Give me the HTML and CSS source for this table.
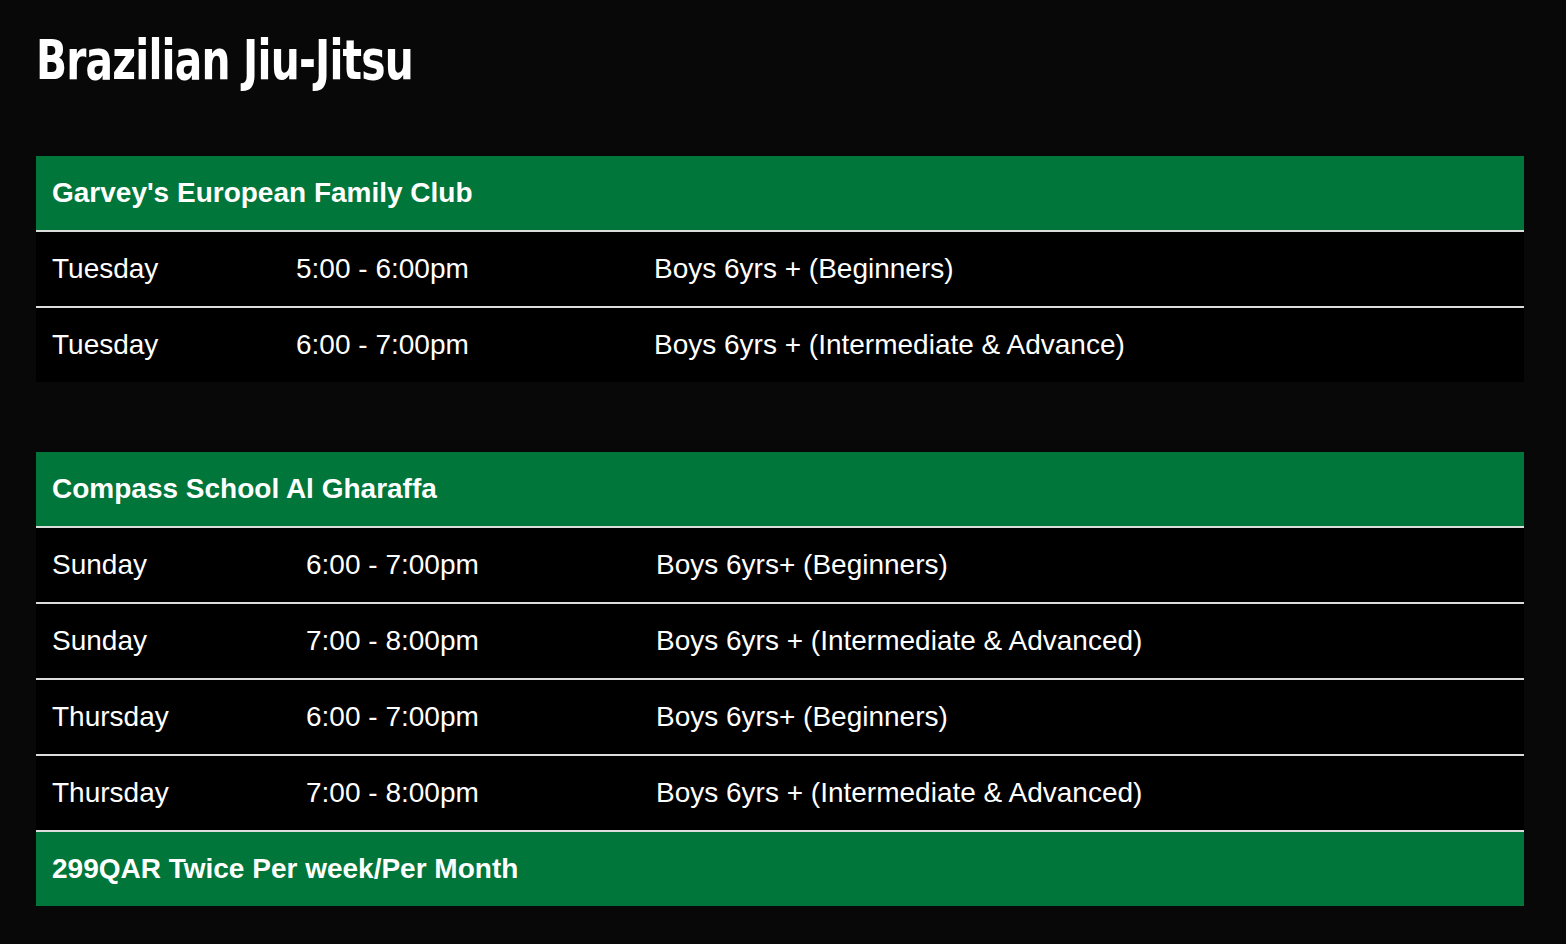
FILE: index.html
```html
<!DOCTYPE html>
<html lang="en">
<head>
<meta charset="utf-8">
<title>Brazilian Jiu-Jitsu</title>
<link rel="stylesheet" href="styles.css">
</head>
<body>
<main class="page">
  <h1 class="title">Brazilian Jiu-Jitsu</h1>

  <section class="schedule schedule-a">
    <div class="head">Garvey's European Family Club</div>
    <div class="row"><span>Tuesday</span><span>5:00 - 6:00pm</span><span>Boys 6yrs + (Beginners)</span></div>
    <div class="row"><span>Tuesday</span><span>6:00 - 7:00pm</span><span>Boys 6yrs + (Intermediate &amp; Advance)</span></div>
  </section>

  <section class="schedule schedule-b">
    <div class="head">Compass School Al Gharaffa</div>
    <div class="row"><span>Sunday</span><span>6:00 - 7:00pm</span><span>Boys 6yrs+ (Beginners)</span></div>
    <div class="row"><span>Sunday</span><span>7:00 - 8:00pm</span><span>Boys 6yrs + (Intermediate &amp; Advanced)</span></div>
    <div class="row"><span>Thursday</span><span>6:00 - 7:00pm</span><span>Boys 6yrs+ (Beginners)</span></div>
    <div class="row"><span>Thursday</span><span>7:00 - 8:00pm</span><span>Boys 6yrs + (Intermediate &amp; Advanced)</span></div>
    <div class="head foot">299QAR Twice Per week/Per Month</div>
  </section>
</main>
</body>
</html>
```

FILE: styles.css
```css
html, body {
  margin: 0;
  padding: 0;
  background: #080808;
}

.page {
  padding: 26px 42px 38px 36px;
  font-family: "Liberation Sans", Arial, sans-serif;
  color: #ffffff;
}

.title {
  margin: 0 0 62px 0;
  font-family: "DejaVu Sans Condensed", "Liberation Sans", sans-serif;
  font-weight: 700;
  font-size: 56px;
  line-height: 68px;
  letter-spacing: -1px;
  color: #ffffff;
  transform: scaleX(0.81);
  transform-origin: left center;
}

.schedule {
  display: flex;
  flex-direction: column;
  background: #000000;
}

.schedule + .schedule {
  margin-top: 70px;
}

.head {
  background: #00763a;
  font-weight: 700;
  font-size: 28px;
  line-height: 32px;
  padding: 21px 16px;
}

.foot {
  border-top: 2px solid #dcdcdc;
}

.row {
  display: grid;
  border-top: 2px solid #dcdcdc;
  font-size: 28px;
  line-height: 32px;
}

.row span {
  padding: 21px 16px;
}

.schedule-a .row {
  grid-template-columns: 244px 358px 1fr;
}

.schedule-b .row {
  grid-template-columns: 254px 350px 1fr;
}
```
